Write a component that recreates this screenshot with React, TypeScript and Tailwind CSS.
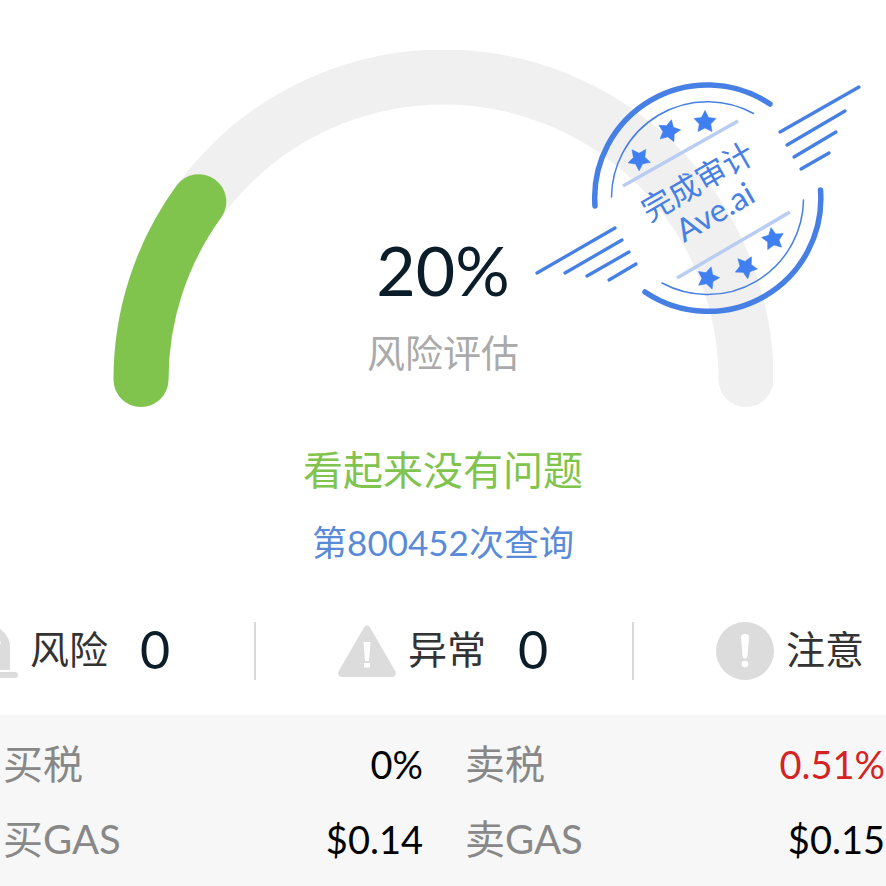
import React from "react";

const STAMP_BLUE = "#4680e4";

const stars = [
  { x: 639, y: 159, rotate: -37 },
  { x: 669, y: 131, rotate: 12 },
  { x: 705, y: 122, rotate: 0 },
  { x: 773, y: 239, rotate: -10 },
  { x: 746, y: 267, rotate: 28 },
  { x: 708, y: 278, rotate: 16 },
];

const wingLines = [
  [537, 273, 615, 228],
  [565, 273, 622, 240],
  [587, 276, 629, 252],
  [609, 280, 636, 264],
  [780, 132, 859, 87],
  [787, 145, 845, 111],
  [794, 157, 836, 132],
  [801, 169, 829, 153],
];

function Gauge() {
  return (
    <svg viewBox="0 0 660 358" className="w-full" aria-hidden="true">
      <g fill="none" strokeWidth="55" strokeLinecap="round">
        <path d="M28 329.500A302.500 302.500 0 0 1 633 329.500" stroke="#f0f0f0" />
        <path d="M28 329.500A302.500 302.500 0 0 1 85.800 151.700" stroke="#80c44d" />
      </g>
    </svg>
  );
}

function AuditStamp() {
  return (
    <svg
      viewBox="533 80 330 236"
      className="absolute top-[80px] left-1/2 ml-[90px] w-[330px]"
      role="img"
      aria-label="完成审计 Ave.ai"
    >
      <g fill="none" stroke={STAMP_BLUE} strokeLinecap="round">
        <path d="M595 206A112.700 112.700 0 0 1 770 104M820.500 190A112.700 112.700 0 0 1 645 292" strokeWidth="5.500" />
        <path d="M611.500 197A96 96 0 0 1 753.500 113.500M803.500 200A96 96 0 0 1 662 283" strokeWidth="1.500" />
        {wingLines.map(([x1, y1, x2, y2]) => (
          <line key={x1} x1={x1} y1={y1} x2={x2} y2={y2} strokeWidth="3.300" />
        ))}
      </g>
      <path d="M623 186L738 121M677 278L790 212" stroke="#b9cdf2" strokeWidth="3.500" />
      {stars.map((s) => (
        <path
          key={s.x}
          transform={`translate(${s.x} ${s.y}) rotate(${s.rotate})`}
          d="M0 -11.500L3.500 -4.500L11 -3.500L5.700 2L7 9.500L0 6L-7 9.500L-5.700 2L-11 -3.500L-3.500 -4.500Z"
          fill="#3f7ff0"
          stroke="#3f7ff0"
          strokeWidth=".6"
        />
      ))}
      <g
        transform="rotate(-30 708 198)"
        fill={STAMP_BLUE}
        textAnchor="middle"
        className="font-['Lato','Noto_Sans_CJK_SC',sans-serif]"
      >
        <text x="707" y="190" fontSize="31">完成审计</text>
        <text x="707" y="225" fontSize="32">Ave.ai</text>
      </g>
    </svg>
  );
}

function AlarmIcon() {
  return (
    <svg viewBox="0 0 58 58" className="size-[58px]" aria-hidden="true">
      <path d="M8 48V25a21 21 0 0 1 42 0v23Z" fill="#dcdcdc" />
      <rect y="50" width="58" height="6" rx="3" fill="#dcdcdc" />
      <path d="M28 13a13 13 0 0 1 12 8" fill="none" stroke="#fff" strokeWidth="2" strokeLinecap="round" />
    </svg>
  );
}

function TriangleIcon() {
  return (
    <svg viewBox="0 0 58 58" className="size-[58px]" aria-hidden="true">
      <path d="M26 5.500Q29 1 32 5.500L57.500 49.500Q59 54.500 54 55H4Q-1 54.500 .5 49.500Z" fill="#dcdcdc" />
      <path d="M25.500 20H32.500L31 39H27ZM26 41H32V45.500H26Z" fill="#fff" />
    </svg>
  );
}

function NoticeIcon() {
  return (
    <svg viewBox="0 0 58 58" className="size-[58px]" aria-hidden="true">
      <circle cx="29" cy="29" r="29" fill="#dcdcdc" />
      <path d="M25 15q0-3 4-3t4 3L31.500 34q-.5 2.500-2.500 2.500T26.500 34Z" fill="#fff" />
      <circle cx="29" cy="42" r="3.300" fill="#fff" />
    </svg>
  );
}

const stats = [
  { label: "风险", count: "0", Icon: AlarmIcon },
  { label: "异常", count: "0", Icon: TriangleIcon },
  { label: "注意", count: null, Icon: NoticeIcon },
];

const rows = [
  { buy: "买税", buyValue: "0%", sell: "卖税", sellValue: "0.51%", warn: true },
  { buy: "买GAS", buyValue: "$0.14", sell: "卖GAS", sellValue: "$0.15", warn: false },
];

export default function App() {
  return (
    <main className="flex min-h-screen flex-col overflow-hidden bg-white font-['Lato','Noto_Sans_CJK_SC',sans-serif]">
      <section className="relative flex flex-col items-center pt-[50px] text-center">
        <div className="relative w-[660px] max-w-full">
          <Gauge />
          <div className="absolute inset-x-0 bottom-[34px] flex flex-col items-center">
            <p className="text-[68px] leading-[80px] text-[#0b1d28]">20%</p>
            <p className="mt-5 text-[38px] leading-[44px] text-[#aaa]">风险评估</p>
          </div>
        </div>
        <AuditStamp />
        <h1 className="mt-[38px] text-[40px] leading-[48px] text-[#80c44d]">看起来没有问题</h1>
        <p className="mt-[26px] text-[35px] leading-[44px] text-[#5a8bd8]">第800452次查询</p>
      </section>

      <ul className="mt-[58px] -ml-[122px] grid w-[128%] grid-cols-3 divide-x-2 divide-[#d8d8d8]">
        {stats.map(({ label, count, Icon }) => (
          <li key={label} className="flex h-[58px] items-center pl-[82px]">
            <Icon />
            <span className="ml-3 pb-1 text-[39px] leading-[48px] text-[#333]">{label}</span>
            {count && <span className="ml-8 pb-1 text-[52px] leading-[56px] text-[#0b1d28]">{count}</span>}
          </li>
        ))}
      </ul>

      <section className="mt-[35px] grow bg-[#f7f7f7] pt-[11px]">
        <table className="w-full table-fixed text-[40px] leading-[48px]">
          <tbody>
            {rows.map((row) => (
              <tr key={row.buy} className="h-[75px]">
                <th scope="row" className="pl-[3px] text-left font-normal text-[#888]">{row.buy}</th>
                <td className="pr-5 text-right text-[38px] text-black">{row.buyValue}</td>
                <th scope="row" className="pl-[22px] text-left font-normal text-[#888]">{row.sell}</th>
                <td className={row.warn ? "pr-px text-right text-[38px] text-[#d42323]" : "pr-px text-right text-[38px] text-black"}>
                  {row.sellValue}
                </td>
              </tr>
            ))}
          </tbody>
        </table>
      </section>
    </main>
  );
}
